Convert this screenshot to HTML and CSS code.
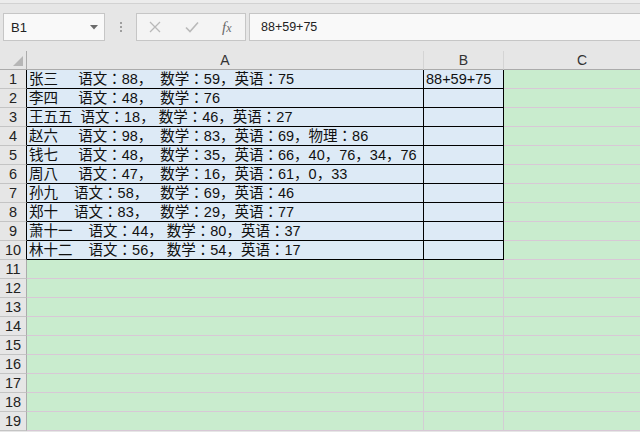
FILE: index.html
```html
<!DOCTYPE html>
<html lang="zh-CN">
<head>
<meta charset="utf-8">
<title>Excel</title>
<link rel="stylesheet" href="styles.css">
</head>
<body>
<div class="app">
  <div class="topline"></div>
  <div class="formula-bar">
    <div class="name-box">
      <span class="name-text">B1</span>
      <svg class="dropdown" width="8" height="5" viewBox="0 0 8 5"><path d="M0 0H8L4 4.5Z" fill="#6b6b6b"/></svg>
    </div>
    <div class="grip"><i></i><i></i><i></i></div>
    <div class="fx-buttons">
      <svg class="btn-icon" width="12" height="12" viewBox="0 0 12 12"><path d="M1 1L11 11M11 1L1 11" stroke="#b9b9b9" stroke-width="1.3" fill="none"/></svg>
      <svg class="btn-icon" width="14" height="12" viewBox="0 0 14 12"><path d="M1 6.5L5 10.5L13 1.5" stroke="#b9b9b9" stroke-width="1.6" fill="none"/></svg>
      <span class="fx">f<span class="fx-x">x</span></span>
    </div>
    <div class="formula-input">88+59+75</div>
  </div>
  <div class="sheet">
    <div class="corner"><span class="corner-tri"></span></div>
    <div class="col-head">A</div>
    <div class="col-head">B</div>
    <div class="col-head">C</div>

    <div class="row-head dark">1</div>
    <div class="cell data">张三     语文：88，  数学：59，英语：75</div>
    <div class="cell data">88+59+75</div>
    <div class="cell empty"></div>

    <div class="row-head dark">2</div>
    <div class="cell data">李四     语文：48，  数学：76</div>
    <div class="cell data"></div>
    <div class="cell empty"></div>

    <div class="row-head dark">3</div>
    <div class="cell data">王五五  语文：18， 数学：46，英语：27</div>
    <div class="cell data"></div>
    <div class="cell empty"></div>

    <div class="row-head dark">4</div>
    <div class="cell data">赵六     语文：98，  数学：83，英语：69，物理：86</div>
    <div class="cell data"></div>
    <div class="cell empty"></div>

    <div class="row-head dark">5</div>
    <div class="cell data">钱七     语文：48，  数学：35，英语：66，40，76，34，76</div>
    <div class="cell data"></div>
    <div class="cell empty"></div>

    <div class="row-head dark">6</div>
    <div class="cell data">周八     语文：47，  数学：16，英语：61，0，33</div>
    <div class="cell data"></div>
    <div class="cell empty"></div>

    <div class="row-head dark">7</div>
    <div class="cell data">孙九    语文：58，   数学：69，英语：46</div>
    <div class="cell data"></div>
    <div class="cell empty"></div>

    <div class="row-head dark">8</div>
    <div class="cell data">郑十    语文：83，   数学：29，英语：77</div>
    <div class="cell data"></div>
    <div class="cell empty"></div>

    <div class="row-head dark">9</div>
    <div class="cell data">萧十一    语文：44， 数学：80，英语：37</div>
    <div class="cell data"></div>
    <div class="cell empty"></div>

    <div class="row-head dark">10</div>
    <div class="cell data">林十二    语文：56， 数学：54，英语：17</div>
    <div class="cell data"></div>
    <div class="cell empty"></div>

    <div class="row-head">11</div><div class="cell empty"></div><div class="cell empty"></div><div class="cell empty"></div>
    <div class="row-head">12</div><div class="cell empty"></div><div class="cell empty"></div><div class="cell empty"></div>
    <div class="row-head">13</div><div class="cell empty"></div><div class="cell empty"></div><div class="cell empty"></div>
    <div class="row-head">14</div><div class="cell empty"></div><div class="cell empty"></div><div class="cell empty"></div>
    <div class="row-head">15</div><div class="cell empty"></div><div class="cell empty"></div><div class="cell empty"></div>
    <div class="row-head">16</div><div class="cell empty"></div><div class="cell empty"></div><div class="cell empty"></div>
    <div class="row-head">17</div><div class="cell empty"></div><div class="cell empty"></div><div class="cell empty"></div>
    <div class="row-head">18</div><div class="cell empty"></div><div class="cell empty"></div><div class="cell empty"></div>
    <div class="row-head">19</div><div class="cell empty"></div><div class="cell empty"></div><div class="cell empty"></div>
  </div>
</div>
</body>
</html>
```
FILE: styles.css
```css
* { box-sizing: border-box; }
html, body {
  margin: 0;
  padding: 0;
}
body {
  width: 640px;
  height: 432px;
  overflow: hidden;
  background: #e6e6e6;
  font-family: "Liberation Sans", "Noto Sans CJK SC", sans-serif;
}
.app {
  width: 640px;
  height: 432px;
  display: flex;
  flex-direction: column;
  overflow: hidden;
}
.topline {
  height: 4px;
  background: #ececec;
  border-bottom: 1px solid #d2d2d2;
  flex: none;
}
.formula-bar {
  height: 47px;
  flex: none;
  display: flex;
  align-items: flex-start;
  padding: 9px 0 0 3px;
}
.name-box {
  width: 102px;
  height: 28px;
  background: #f9f9f9;
  border: 1px solid #c6c6c6;
  display: flex;
  align-items: center;
  padding: 0 6px 0 7px;
  justify-content: space-between;
}
.name-text {
  font-size: 13px;
  color: #222;
}
.dropdown { margin-top: 1px; }
.grip {
  width: 31px;
  height: 28px;
  display: flex;
  flex-direction: column;
  align-items: center;
  justify-content: center;
  gap: 2px;
}
.grip i {
  display: block;
  width: 2px;
  height: 2px;
  background: #9e9e9e;
}
.fx-buttons {
  width: 110px;
  height: 28px;
  background: #f4f4f4;
  border: 1px solid #c6c6c6;
  display: flex;
  align-items: center;
  padding: 0 0 0 12px;
  gap: 24px;
}
.fx {
  font-family: "Liberation Serif", serif;
  font-style: italic;
  font-size: 15px;
  color: #6a6a6a;
  margin-left: -1px;
}
.fx-x { font-size: 12px; }
.formula-input {
  flex: 1;
  height: 28px;
  margin-left: 3px;
  background: #f9f9f9;
  border: 1px solid #c6c6c6;
  border-right: none;
  font-size: 12.5px;
  line-height: 26px;
  padding-left: 11px;
  color: #222;
}
.sheet {
  flex: 1;
  display: grid;
  grid-template-columns: 27px 397px 80px 157px;
  grid-auto-rows: 19px;
  overflow: hidden;
}
.corner {
  background: #e6e6e6;
  border-right: 1px solid #ababab;
  border-bottom: 1px solid #ababab;
  position: relative;
}
.corner-tri {
  position: absolute;
  right: 3px;
  bottom: 3px;
  width: 0;
  height: 0;
  border-left: 10px solid transparent;
  border-bottom: 10px solid #b6b6b6;
}
.col-head {
  background: #e6e6e6;
  border-right: 1px solid #d4d4d4;
  border-bottom: 1px solid #ababab;
  text-align: center;
  font-size: 14px;
  line-height: 19px;
  color: #333;
}
.row-head {
  background: #e6e6e6;
  border-right: 1px solid #ababab;
  border-bottom: 1px solid #c4c4c4;
  text-align: center;
  font-size: 14.5px;
  line-height: 19px;
  color: #222;
}
.row-head.dark { border-right-color: #000; }
.cell {
  white-space: pre;
  overflow: hidden;
  font-family: "Liberation Sans", "Noto Sans CJK JP", sans-serif;
  font-feature-settings: "locl" 0;
  font-size: 14.5px;
  line-height: 18px;
  padding-left: 2px;
  color: #111;
}
.cell.data {
  background: #ddeaf6;
  border-right: 1px solid #000;
  border-bottom: 1px solid #000;
}
.cell.empty {
  background: #c9ecce;
  border-right: 1px solid #d3cdd3;
  border-bottom: 1px solid #d8c8d6;
}
```
